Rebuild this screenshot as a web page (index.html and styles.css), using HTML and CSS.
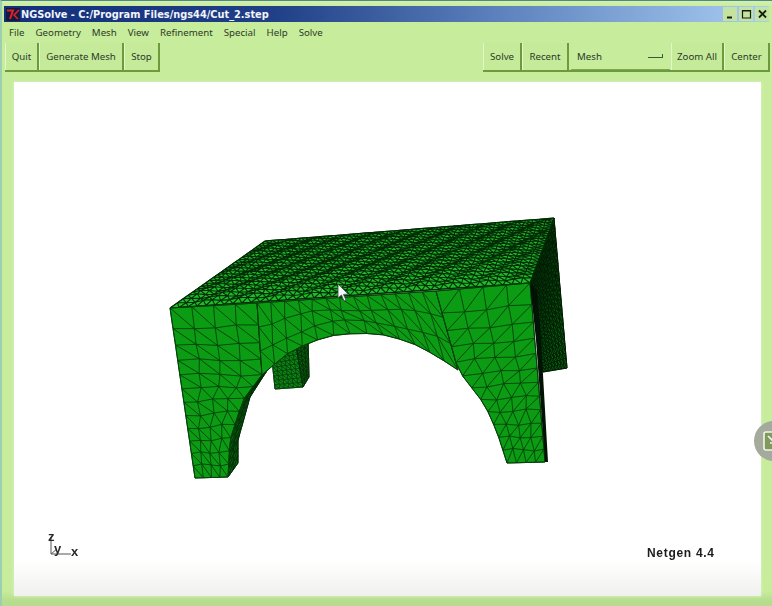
FILE: index.html
```html
<!DOCTYPE html>
<html lang="en">
<head>
  <meta charset="UTF-8">
  <title>NGSolve - C:/Program Files/ngs44/Cut_2.step</title>
  <link rel="stylesheet" href="styles.css">
</head>
<body>

  <div class="window">
    <div class="titlebar">
      <svg class="tk-icon" width="14" height="13" viewBox="0 0 14 13">
        <rect width="14" height="13" fill="#141a3a"/>
        <path d="M1 2.5H7L4 11" fill="none" stroke="#e0212c" stroke-width="2"/>
        <path d="M13 2L8 7L12 11" fill="none" stroke="#e0212c" stroke-width="1.6"/>
      </svg>
      <span class="title">NGSolve - C:/Program Files/ngs44/Cut_2.step</span>
      <div class="win-buttons">
        <div class="win-btn">
          <svg width="13" height="12" viewBox="0 0 13 12"><path d="M3 9.5H8" stroke="#10200c" stroke-width="2"/></svg>
        </div>
        <div class="win-btn">
          <svg width="13" height="12" viewBox="0 0 13 12"><path d="M2.5 2.5H10.5V10H2.5Z M2.5 3H10.5" fill="none" stroke="#10200c" stroke-width="1.2"/></svg>
        </div>
        <div class="win-btn">
          <svg width="13" height="12" viewBox="0 0 13 12"><path d="M3 2.5L10 9.5M10 2.5L3 9.5" stroke="#10200c" stroke-width="1.8"/></svg>
        </div>
      </div>
    </div>

    <div class="menubar">
      <span>File</span>
      <span>Geometry</span>
      <span>Mesh</span>
      <span>View</span>
      <span>Refinement</span>
      <span>Special</span>
      <span>Help</span>
      <span>Solve</span>
    </div>

    <div class="toolbar">
      <div class="tool-group">
        <button class="tool-btn btn-quit">Quit</button>
        <button class="tool-btn btn-generate">Generate Mesh</button>
        <button class="tool-btn btn-stop">Stop</button>
      </div>
      <div class="tool-group">
        <button class="tool-btn btn-solve">Solve</button>
        <button class="tool-btn btn-recent">Recent</button>
        <div class="tool-select">
          <span>Mesh</span>
          <i class="select-mark"></i>
        </div>
        <button class="tool-btn btn-zoom">Zoom All</button>
        <button class="tool-btn btn-center">Center</button>
      </div>
    </div>

    <div class="canvas">
      <svg id="view" width="747" height="514" viewBox="14 82 747 514">
        <g id="mesh"></g>
        <polygon class="cursor" points="338,284 338,298 341.500,295 344,301 346,300 343.500,294.500 348,294"/>
        <g class="axes">
          <path d="M51 554V537M51 554H71M51 554L57 549"/>
          <text x="48" y="541">z</text>
          <text x="54" y="553">y</text>
          <text x="71" y="556">x</text>
        </g>
        <text class="version" x="647" y="557">Netgen 4.4</text>
      </svg>
    </div>
  </div>

  <div class="float-badge">
    <svg width="18" height="20" viewBox="0 0 18 20">
      <rect x="1" y="1" width="20" height="18" rx="2" fill="#7f9a5c" stroke="#f2f6ea" stroke-width="1.6"/>
      <path d="M5 5L12 12M12 7V12H7" fill="none" stroke="#f2f6ea" stroke-width="1.6"/>
    </svg>
  </div>

  <script src="mesh.js"></script>
</body>
</html>
```

FILE: styles.css
```css
html, body {
  margin: 0;
  padding: 0;
}
body {
  position: relative;
  width: 772px;
  height: 606px;
  overflow: hidden;
  background: #c6ec9c;
  font-family: 'Noto Sans', sans-serif;
  color: #2c3a28;
}
.window {
  display: flex;
  flex-direction: column;
  height: 606px;
  box-sizing: border-box;
  padding-top: 5px;
  border-top: 1px solid #4d8a86;
  border-left: 2px solid #9ccfb0;
  background: linear-gradient(to bottom, #d4f0b0 0, #c6ec9c 6px, #c6ec9c 590px, #b6dc8e 600px);
}
.titlebar {
  display: flex;
  align-items: center;
  height: 16px;
  margin: 0 3px 0 2px;
  background: linear-gradient(to right, #13307c 0, #1f3f86 35%, #5d82bd 65%, #a9cdf2 100%);
}
.tk-icon {
  margin-left: 2px;
}
.title {
  margin-left: 1px;
  font-family: 'DejaVu Sans', sans-serif;
  font-size: 9.800px;
  font-weight: bold;
  color: #f2f4fa;
  white-space: nowrap;
}
.win-buttons {
  display: flex;
  gap: 2px;
  margin-left: auto;
}
.win-btn {
  display: flex;
  width: 14px;
  height: 14px;
  align-items: center;
  justify-content: center;
  background: #c4e3a0;
}
.menubar {
  display: flex;
  align-items: center;
  gap: 11px;
  height: 20px;
  padding-left: 7px;
  font-size: 9.700px;
}
.toolbar {
  display: flex;
  justify-content: space-between;
  height: 29px;
  margin: 1px 2px 0 3px;
}
.tool-group {
  display: flex;
  border-bottom: 2px solid #6c9a3c;
}
.tool-btn {
  height: 100%;
  padding: 0;
  border: none;
  border-right: 2px solid #6c9a3c;
  border-left: 1px solid #e2f7c8;
  background: #c4ea9a;
  font-family: inherit;
  font-size: 9.700px;
  color: #2c3a28;
}
.btn-quit { width: 34px; }
.btn-generate { width: 85px; }
.btn-stop { width: 36px; }
.btn-solve { width: 39px; }
.btn-recent { width: 47px; }
.btn-zoom { width: 53px; }
.btn-center { width: 46px; }
.tool-select {
  display: flex;
  align-items: center;
  justify-content: space-between;
  box-sizing: border-box;
  width: 99px;
  padding: 0 7px 0 6px;
  margin: 0 1px 0 2px;
  border-bottom: 1px solid #7ea852;
  font-size: 9.700px;
}
.select-mark {
  width: 14px;
  height: 3px;
  border-bottom: 1px solid #3c5a2c;
  border-right: 1px solid #3c5a2c;
}
.canvas {
  width: 747px;
  height: 514px;
  margin: 10px 0 0 12px;
  background: linear-gradient(to bottom, #fff 0, #fff 93%, #f0f1ee 100%);
  box-shadow: 0 0 3px #e2f4cc;
}
#view {
  display: block;
  filter: blur(0.4px);
}
.cursor {
  fill: #f4f6f8;
  stroke: #3a4a40;
  stroke-width: 0.8;
}
.axes path {
  fill: none;
  stroke: #555;
  stroke-width: 1;
}
.axes text {
  font-family: 'Liberation Sans', sans-serif;
  font-size: 13px;
  font-weight: bold;
  fill: #2a2a2a;
}
.version {
  font-family: 'Liberation Sans', sans-serif;
  font-size: 12px;
  font-weight: bold;
  letter-spacing: 0.7px;
  fill: #1c1c1c;
}
.float-badge {
  position: absolute;
  left: 754px;
  top: 421px;
  display: flex;
  align-items: center;
  box-sizing: border-box;
  width: 40px;
  height: 40px;
  padding-left: 9px;
  border-radius: 50%;
  background: #a4aa9c;
}
```

FILE: mesh.js
```js
// builds the netgen surface mesh from a few ruled patches, page coordinates
const NS = "http://www.w3.org/2000/svg";
const meshGroup = document.getElementById("mesh");

function lerp(p, q, t) {
  return [p[0] + (q[0] - p[0]) * t, p[1] + (q[1] - p[1]) * t];
}

function sample(poly, t) {
  let total = 0;
  const lens = [];
  for (let i = 0; i < poly.length - 1; i++) {
    const l = Math.hypot(poly[i + 1][0] - poly[i][0], poly[i + 1][1] - poly[i][1]);
    lens.push(l);
    total += l;
  }
  let d = t * total;
  for (let i = 0; i < lens.length; i++) {
    if (d <= lens[i] || i === lens.length - 1) return lerp(poly[i], poly[i + 1], d / lens[i]);
    d -= lens[i];
  }
}

function fmt(p) {
  return p[0].toFixed(1) + " " + p[1].toFixed(1);
}

function patch(o) {
  const pow = o.pow || 1;
  const jitter = o.jitter || 0;
  const pt = (c, r) => {
    const v = Math.pow(r / o.rows, pow);
    const p = lerp(sample(o.a, v), sample(o.b, v), c / o.cols);
    if (c > 0 && c < o.cols && r > 0 && r < o.rows) {
      // fixed wobble so inner nodes don't sit on a perfect grid
      p[0] += Math.sin(c * 12.9 + r * 78.2) * jitter;
      p[1] += Math.sin(c * 39.3 + r * 11.7) * jitter;
    }
    return p;
  };

  let edge = "M" + fmt(pt(0, 0));
  for (let c = 1; c <= o.cols; c++) edge += "L" + fmt(pt(c, 0));
  for (let r = 1; r <= o.rows; r++) edge += "L" + fmt(pt(o.cols, r));
  for (let c = o.cols - 1; c >= 0; c--) edge += "L" + fmt(pt(c, o.rows));
  for (let r = o.rows - 1; r > 0; r--) edge += "L" + fmt(pt(0, r));
  edge += "Z";

  let lines = "";
  for (let r = 0; r <= o.rows; r++) {
    for (let c = 0; c <= o.cols; c++) {
      if (c < o.cols) lines += "M" + fmt(pt(c, r)) + "L" + fmt(pt(c + 1, r));
      if (r < o.rows) lines += "M" + fmt(pt(c, r)) + "L" + fmt(pt(c, r + 1));
      if (c < o.cols && r < o.rows) {
        if (o.flip) lines += "M" + fmt(pt(c + 1, r)) + "L" + fmt(pt(c, r + 1));
        else lines += "M" + fmt(pt(c, r)) + "L" + fmt(pt(c + 1, r + 1));
      }
    }
  }

  const fill = document.createElementNS(NS, "path");
  fill.setAttribute("d", edge);
  fill.setAttribute("fill", o.fill);
  fill.setAttribute("stroke", o.edge || o.stroke);
  fill.setAttribute("stroke-width", "1");
  meshGroup.appendChild(fill);

  const wire = document.createElementNS(NS, "path");
  wire.setAttribute("d", lines);
  wire.setAttribute("fill", "none");
  wire.setAttribute("stroke", o.stroke);
  wire.setAttribute("stroke-width", o.width);
  meshGroup.appendChild(wire);
}

const FRONT = "#0b9c14";
const WIRE = "#063f0a";

// back left leg
patch({ a: [[271, 350], [275, 389]], b: [[296, 345], [303, 387]], cols: 6, rows: 9, fill: "#0c8a14", stroke: "#07400b", width: 0.9 });
patch({ a: [[296, 345], [303, 387]], b: [[308, 336], [309, 377]], cols: 3, rows: 9, fill: "#075c0d", stroke: "#042c07", width: 0.9 });

// back right leg and the side face
patch({ a: [[530, 283], [543, 372]], b: [[554, 218], [567, 368]], cols: 8, rows: 30, flip: true, fill: "#0a6f12", stroke: "#021c04", width: 1 });

// top face, rows packed tighter toward the back
patch({ a: [[170, 308], [265, 241]], b: [[530, 283], [554, 218]], cols: 40, rows: 24, pow: 0.8, jitter: 1, flip: true, fill: "#1fbb29", stroke: "#032c06", width: 1.1 });

// underside of the arch
patch({
  a: [[270, 366], [250, 397], [238, 440], [238, 463]],
  b: [[262, 375], [243, 400], [230, 440], [228, 477]],
  cols: 2, rows: 14, fill: "#06600d", stroke: "#032c06", width: 0.9
});

const ARCH = [[262, 375], [285, 355], [310, 342], [335, 335], [360, 333], [385, 335], [410, 342], [435, 355], [458, 370]];

// front face: left leg, middle, right leg
patch({
  a: [[170, 308], [195, 478]],
  b: [[257, 303], [262, 375], [243, 400], [230, 440], [228, 477]],
  cols: 4, rows: 12, pow: 0.85, jitter: 1.5, fill: FRONT, stroke: WIRE, width: 0.9
});
patch({
  a: [[257, 303], [436, 291]],
  b: ARCH,
  cols: 3, rows: 13, jitter: 2, fill: FRONT, stroke: WIRE, width: 0.9
});
patch({
  a: [[436, 291], [458, 370], [485, 405], [497, 432], [507, 463]],
  b: [[530, 283], [545, 462]],
  cols: 4, rows: 12, pow: 0.85, jitter: 1.5, flip: true, fill: FRONT, stroke: WIRE, width: 0.9
});

// dark band down the right edge of the front
const band = document.createElementNS(NS, "path");
band.setAttribute("d", "M530 283L536 340L545 462L548 462L541 340L537 290Z");
band.setAttribute("fill", "#021204");
meshGroup.appendChild(band);
```
